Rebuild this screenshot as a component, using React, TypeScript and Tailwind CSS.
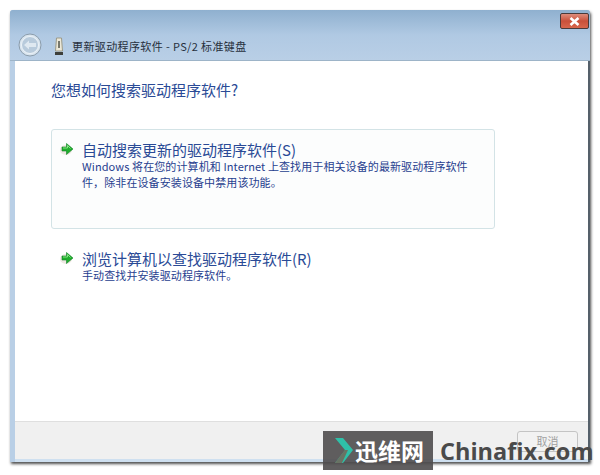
import React from 'react';

const cjk = { fontFamily: '"Noto Sans CJK SC", "Liberation Sans", sans-serif' };

const Arrow = () => (
  <svg width="16" height="14" viewBox="0 0 16 14" className="shrink-0">
    <ellipse cx="6" cy="8" rx="6" ry="5" fill="#e4d8d0" opacity="0.6" />
    <path d="M2 5h4.5V1.5L13 7l-6.5 5.5V9H2z" fill="#1fae2c" stroke="#137f28" strokeWidth="0.6" />
    <path d="M3 6h4.5V3.5L10.5 6.5" fill="none" stroke="#90e88c" strokeWidth="0.9" />
  </svg>
);

const Option = ({ title, lines, boxed }: { title: string; lines: string[]; boxed?: boolean }) => (
  <div className={`flex w-[444px] rounded-[3px] pl-[8px] ${boxed ? 'h-[100px] border border-[#d3e3e6] bg-[#fcfdfd] pt-[5px]' : 'mt-[12px] border border-transparent pt-[2px]'}`}>
    <div className="mt-[7px] w-[22px] shrink-0">
      <Arrow />
    </div>
    <div>
      <div className="mt-[6px] text-[15px] leading-[17px] text-[#2a4a96]">{title}</div>
      {lines.map((l) => (
        <div key={l} className="text-[11px] leading-[16px] tracking-[0.1px] whitespace-nowrap text-[#27408f]">{l}</div>
      ))}
    </div>
  </div>
);

export default function App() {
  return (
    <div className="relative h-[475px] w-[600px] overflow-hidden bg-white pt-[10px] pl-[10px]" style={cjk}>
      <div className="flex h-[452px] w-[580px] flex-col rounded-t-[3px] bg-[#b9cfe6] shadow-[1px_2px_3px_rgba(0,0,0,0.7)]">
        {/* title bar */}
        <div className="relative h-[51px] shrink-0 rounded-t-[3px] border-b border-[#9db4c8] bg-gradient-to-b from-[#8fb0cf] via-[#b0c9e3] to-[#b9cfe6]">
          <div className="absolute top-[3px] right-[1px] flex h-[16px] w-[29px] items-center justify-center rounded-[2px] border border-[#4a3a3a] bg-gradient-to-b from-[#dd8c7c] via-[#c9503a] to-[#d8664c]">
            <svg width="11" height="9" viewBox="0 0 11 9">
              <path d="M1.5 1 9.5 8M9.5 1 1.5 8" stroke="#fff" strokeWidth="2.6" />
            </svg>
          </div>
          <div className="flex h-full items-end pb-[3px] pl-[8px]">
            <svg width="24" height="24" viewBox="0 0 24 24" className="shrink-0">
              <circle cx="12" cy="12" r="11" fill="#d9e5ef" stroke="#8a9cab" />
              <circle cx="12" cy="12" r="8.5" fill="#b8cbdc" stroke="#eef4f8" />
              <path d="M6 12l5-4.5V10h7v4h-7v2.5z" fill="#dfe9f1" />
            </svg>
            <svg width="10" height="19" viewBox="0 0 10 19" className="mb-[1px] ml-[12px] shrink-0">
              <path d="M2.5 1h5l1 13h-7z" fill="#ece8d8" stroke="#9c9a88" />
              <rect x="4" y="4" width="2" height="7" fill="#77786c" />
              <rect x="1" y="15" width="8" height="3" fill="#3d3f3a" />
            </svg>
            <span className="mb-[3px] ml-[8px] text-[11px] leading-[16px] tracking-[0.38px] text-[#27303d]">更新驱动程序软件 - PS/2 标准键盘</span>
          </div>
        </div>

        {/* content */}
        <div className="ml-[5px] flex min-h-0 flex-1 flex-col border-r-2 border-[#55606a] bg-white">
          <div className="flex-1 pt-[18px] pl-[36px]">
            <div className="text-[15px] leading-[22px] text-[#2a4a96]">您想如何搜索驱动程序软件?</div>
            <div className="mt-[28px]">
              <Option
                boxed
                title="自动搜索更新的驱动程序软件(S)"
                lines={['Windows 将在您的计算机和 Internet 上查找用于相关设备的最新驱动程序软件', '件，除非在设备安装设备中禁用该功能。']}
              />
              <Option title="浏览计算机以查找驱动程序软件(R)" lines={['手动查找并安装驱动程序软件。']} />
            </div>
          </div>
          <div className="flex h-[38px] shrink-0 justify-end border-t border-[#dfdfdf] bg-[#f0f0f0] pt-[9px] pr-[10px]">
            <div className="flex h-[21px] w-[61px] items-center justify-center rounded-[3px] border border-[#c4c4c4] bg-[#f2f2f2] text-[11px] text-[#a0a0a0]">取消</div>
          </div>
          <div className="h-[3px] shrink-0 bg-[#cfe0f0]" />
        </div>
      </div>

      {/* watermark */}
      <div className="absolute bottom-[5px] left-[323px] flex h-[39px] items-center">
        <div className="flex h-full w-[110px] items-center bg-[#4f4d4e]/90 pl-[12px]">
          <svg width="18" height="25" viewBox="0 0 18 25" className="shrink-0">
            <path d="M0 0h8l10 12-10 13H0l10-13z" fill="#2fc0a8" />
            <path d="M0 25l10-13h3L7 25z" fill="#7d5a4e" opacity="0.75" />
          </svg>
          <span className="ml-[2px] text-[23px] leading-none font-bold text-white">迅维网</span>
        </div>
        <span className="mt-[3px] ml-[7px] text-[23.5px] leading-none font-bold text-[#4a4a4a]" style={{ fontFamily: '"Open Sans", sans-serif' }}>Chinafix.com</span>
      </div>
    </div>
  );
}
